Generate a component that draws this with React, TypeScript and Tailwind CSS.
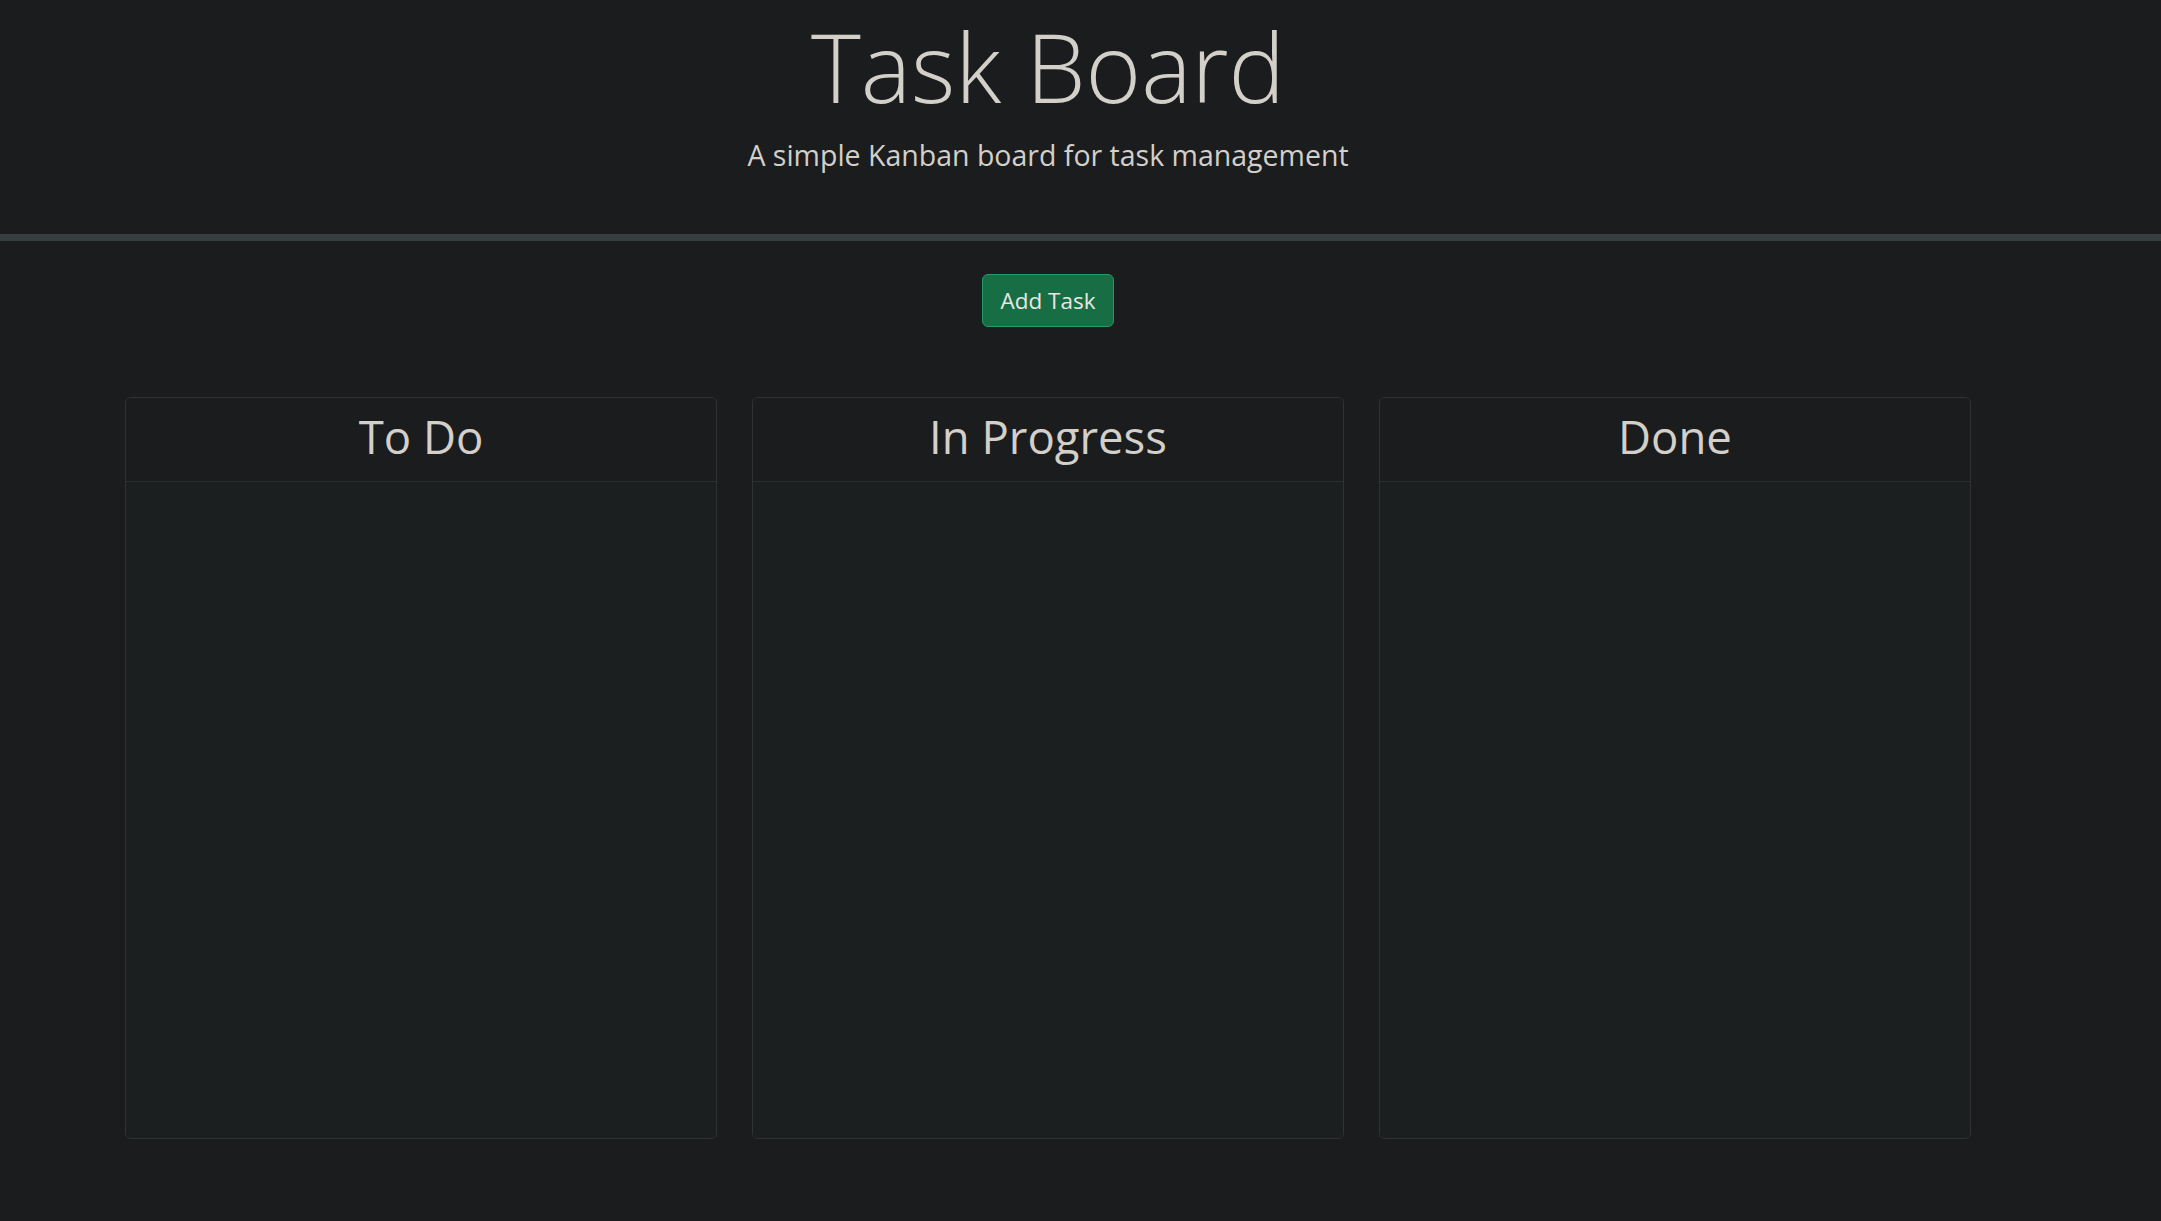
import React from "react";

const columns = ["To Do", "In Progress", "Done"];

export default function App() {
  return (
    <div
      className="min-h-[1221px] w-full bg-[#1b1c1e] text-[#d3cfc9]"
      style={{ fontFamily: '"Open Sans", "Noto Sans", sans-serif' }}
    >
      <div className="w-[2096px]">
        <header className="flex flex-col items-center pt-[8px]">
          <h1 className="text-[95px] font-light leading-[116px] m-0">Task Board</h1>
          <p className="mt-[10px] text-[28.5px] font-normal leading-[42px]">
            A simple Kanban board for task management
          </p>
          <div className="h-[58px]" />
        </header>
      </div>
      <div className="h-[7px] w-full bg-[#363e40]" />
      <div className="w-[2096px]">
        <div className="flex justify-center pt-[33px]">
          <button className="h-[53px] rounded-[6px] border border-[#1f9e60] bg-[#176e45] px-[17px] text-[22.5px] leading-[33px] text-[#e8e6e3]">
            Add Task
          </button>
        </div>
        <div className="mt-[70px] flex gap-[35px] px-[125px]">
          {columns.map((c) => (
            <div
              key={c}
              className="flex h-[742px] flex-1 flex-col overflow-hidden rounded-[6px] border border-[#303336]"
            >
              <div className="border-b border-[#2c2f31] bg-[#1b1c1e] pt-[12px] pb-[18px] text-center">
                <h2 className="text-[45.5px] font-normal leading-[53px]">{c}</h2>
              </div>
              <div className="flex-1 bg-[#1c1f20]" />
            </div>
          ))}
        </div>
      </div>
    </div>
  );
}
